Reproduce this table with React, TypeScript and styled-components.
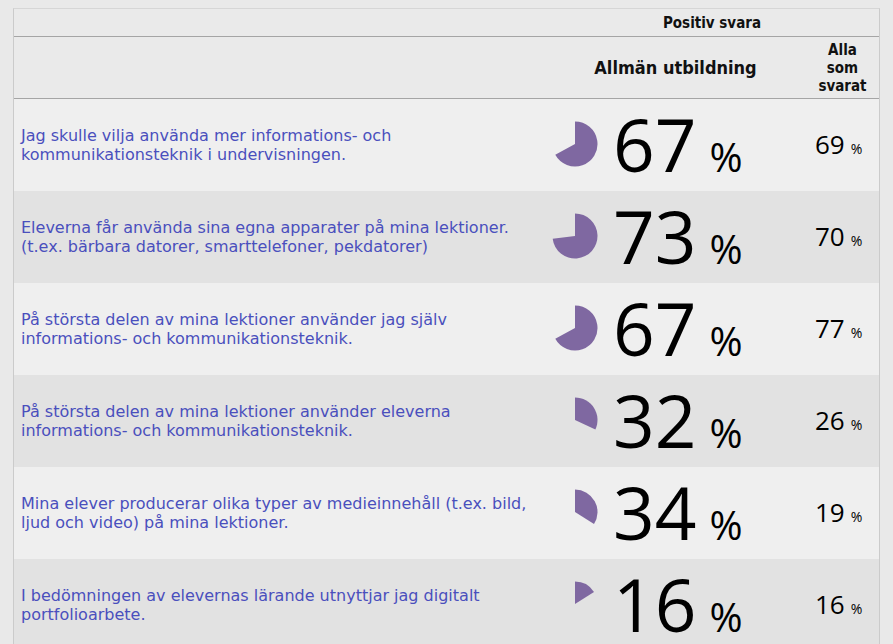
import React from "react";
import styled, { createGlobalStyle } from "styled-components";

const Global = createGlobalStyle`
  html, body { margin: 0; padding: 0; background: #e9e9e9; }
  body { font-family: "DejaVu Sans", Verdana, sans-serif; }
`;

const Page = styled.div`
  padding: 8px 0 0 13px;
  height: 644px;
  box-sizing: border-box;
  overflow: hidden;
`;

const Table = styled.div`
  width: 867px;
  border-left: 1px solid #cbcbcb;
  border-right: 1px solid #cbcbcb;
  border-top: 1px solid #d6d6d6;
  background: #eaeaea;
  box-sizing: border-box;
`;

const cols = "531px 261px 73px";

const HeadTop = styled.div`
  display: grid;
  grid-template-columns: 531px 1fr;
  height: 27px;
  border-bottom: 1px solid #a5a5a5;
  align-items: center;
`;

const HeadMid = styled.div`
  display: grid;
  grid-template-columns: ${cols};
  height: 61px;
  border-bottom: 1px solid #a5a5a5;
  align-items: center;
`;

const HeadLabel = styled.div<{ $size: number }>`
  font-family: "DejaVu Sans Condensed", "DejaVu Sans", sans-serif;
  font-weight: bold;
  font-size: ${(p) => p.$size}px;
  line-height: 18px;
  color: #111;
  text-align: center;
`;

const Row = styled.div<{ $alt: boolean }>`
  display: grid;
  grid-template-columns: ${cols};
  height: 92px;
  align-items: center;
  background: ${(p) => (p.$alt ? "#e2e2e2" : "#efefef")};
`;

const Question = styled.div`
  padding-left: 7px;
  padding-right: 9px;
  font-family: "DejaVu Sans", Verdana, sans-serif;
  font-size: 16px;
  line-height: 19px;
  color: #4a4fbd;
`;

const Main = styled.div`
  display: flex;
  align-items: center;
  padding-left: 7px;
`;

const Pie = styled.svg`
  width: 46px;
  height: 46px;
  flex: none;
  margin-top: -3px;
`;

const Numbers = styled.div`
  display: flex;
  align-items: baseline;
  margin-left: 15px;
  font-family: "Open Sans", "Noto Sans", sans-serif;
  color: #000;
`;

const BigNum = styled.span`
  font-size: 73px;
  line-height: 1;
`;

const BigPct = styled.span`
  font-size: 40px;
  margin-left: 13px;
`;

const Side = styled.div`
  display: flex;
  align-items: baseline;
  justify-content: flex-start;
  padding-left: 9px;
  font-family: "Open Sans", "Noto Sans", sans-serif;
  color: #000;
  margin-top: -3px;
`;

const SideNum = styled.span`
  font-size: 26px;
`;

const SidePct = styled.span`
  font-size: 14px;
  margin-left: 6px;
`;

function piePath(pct: number) {
  const r = 22.5;
  const cx = 23;
  const cy = 23;
  const a = (pct / 100) * Math.PI * 2;
  const x = cx + r * Math.sin(a);
  const y = cy - r * Math.cos(a);
  const large = pct > 50 ? 1 : 0;
  return `M${cx} ${cy} L${cx} ${cy - r} A${r} ${r} 0 ${large} 1 ${x.toFixed(2)} ${y.toFixed(2)} Z`;
}

const rows = [
  {
    q: "Jag skulle vilja använda mer informations- och kommunikationsteknik i undervisningen.",
    v: 67,
    all: 69,
  },
  {
    q: "Eleverna får använda sina egna apparater på mina lektioner. (t.ex. bärbara datorer, smarttelefoner, pekdatorer)",
    v: 73,
    all: 70,
  },
  {
    q: "På största delen av mina lektioner använder jag själv informations- och kommunikationsteknik.",
    v: 67,
    all: 77,
  },
  {
    q: "På största delen av mina lektioner använder eleverna informations- och kommunikationsteknik.",
    v: 32,
    all: 26,
  },
  {
    q: "Mina elever producerar olika typer av medieinnehåll (t.ex. bild, ljud och video) på mina lektioner.",
    v: 34,
    all: 19,
  },
  {
    q: "I bedömningen av elevernas lärande utnyttjar jag digitalt portfolioarbete.",
    v: 16,
    all: 16,
  },
];

export default function App() {
  return (
    <>
      <Global />
      <Page>
        <Table>
          <HeadTop>
            <div />
            <HeadLabel $size={15}>Positiv svara</HeadLabel>
          </HeadTop>
          <HeadMid>
            <div />
            <HeadLabel $size={18}>Allmän utbildning</HeadLabel>
            <HeadLabel $size={15}>
              Alla
              <br />
              som
              <br />
              svarat
            </HeadLabel>
          </HeadMid>
          {rows.map((r, i) => (
            <Row key={i} $alt={i % 2 === 1}>
              <Question>{r.q}</Question>
              <Main>
                <Pie viewBox="0 0 46 46">
                  <path d={piePath(r.v)} fill="#7f68a1" />
                </Pie>
                <Numbers>
                  <BigNum>{r.v}</BigNum>
                  <BigPct>%</BigPct>
                </Numbers>
              </Main>
              <Side>
                <SideNum>{r.all}</SideNum>
                <SidePct>%</SidePct>
              </Side>
            </Row>
          ))}
        </Table>
      </Page>
    </>
  );
}
